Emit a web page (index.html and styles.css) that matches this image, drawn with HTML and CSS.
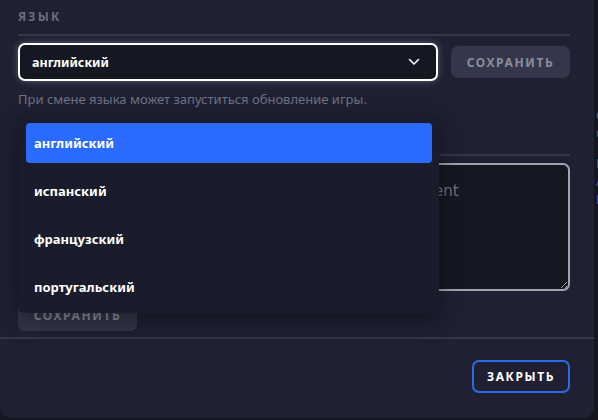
FILE: index.html
```html
<!DOCTYPE html>
<html lang="ru">
<head>
<meta charset="utf-8">
<link rel="stylesheet" href="styles.css">
</head>
<body>
<div class="backdrop">
  <div class="modal">
    <div class="body">
      <div class="section-label">ЯЗЫК</div>
      <div class="divider"></div>
      <div class="row">
        <div class="select">
          <span class="select-value">английский</span>
          <svg class="chevron" width="12" height="8" viewBox="0 0 12 8"><path d="M1.5 1.5 L6 6 L10.5 1.5" fill="none" stroke="#ffffff" stroke-width="1.6" stroke-linecap="round" stroke-linejoin="round"/></svg>
        </div>
        <button class="btn-muted">СОХРАНИТЬ</button>
      </div>
      <p class="hint">При смене языка может запуститься обновление игры.</p>

      <div class="section-label second">ОТЗЫВ</div>
      <div class="divider"></div>
      <textarea class="comment" placeholder="Tell us what you really think about the game agreement"></textarea>
      <button class="btn-muted small">СОХРАНИТЬ</button>

      <ul class="dropdown">
        <li class="option active">английский</li>
        <li class="option">испанский</li>
        <li class="option">французский</li>
        <li class="option">португальский</li>
      </ul>
    </div>
    <div class="footer">
      <button class="btn-close">ЗАКРЫТЬ</button>
    </div>
  </div>
  <div class="behind">
    <span>О</span><span>С</span><span class="gap">Н</span><span class="blue">/</span><span class="blue">F</span>
  </div>
</div>
</body>
</html>
```

FILE: styles.css
```css
* { box-sizing: border-box; }
html, body { margin: 0; padding: 0; }
body {
  width: 598px;
  height: 420px;
  overflow: hidden;
  background: #15161f;
  font-family: "Noto Sans", "Open Sans", sans-serif;
}
.backdrop {
  display: flex;
  height: 420px;
}
.modal {
  width: 594px;
  height: 418px;
  flex: none;
  background: #1f2133;
  border-radius: 0 0 12px 12px;
  display: flex;
  flex-direction: column;
  overflow: hidden;
}
.body {
  position: relative;
  padding: 8px 24px 0 18px;
}
.section-label {
  font-size: 12px;
  line-height: 18px;
  font-weight: 700;
  letter-spacing: 2.2px;
  color: #6b6d7d;
}
.section-label.second { margin-top: 20px; }
.divider {
  height: 2px;
  background: #34364a;
  margin-top: 8px;
}
.row {
  display: flex;
  align-items: center;
  gap: 13px;
  margin-top: 7px;
}
.select {
  width: 420px;
  height: 38px;
  border: 2px solid #ffffff;
  border-radius: 7px;
  background: #151722;
  box-shadow: 0 0 7px rgba(255, 255, 255, 0.28);
  display: flex;
  align-items: center;
  justify-content: space-between;
  padding: 0 16px 0 12px;
}
.select-value {
  color: #ffffff;
  font-size: 12.5px;
  font-weight: 700;
}
.btn-muted {
  height: 32px;
  width: 119px;
  border: none;
  border-radius: 7px;
  background: #34364a;
  color: #8b8d9b;
  font-family: inherit;
  font-size: 12px;
  font-weight: 700;
  letter-spacing: 1.6px;
  padding: 0;
}
.hint {
  margin: 9px 0 0;
  font-size: 13px;
  line-height: 18px;
  color: #6f7283;
}
.comment {
  display: block;
  width: 100%;
  height: 128px;
  margin-top: 7px;
  border: 2px solid #a3a4ad;
  border-radius: 7px;
  background: #151722;
  padding: 16px 12px 16px 18px;
  font-family: "DejaVu Sans", sans-serif;
  font-size: 15px;
  line-height: 20px;
  color: #ffffff;
  resize: vertical;
}
.comment::placeholder { color: #72747f; }
.btn-muted.small {
  display: block;
  margin-top: 8px;
}
.dropdown {
  position: absolute;
  left: 18px;
  top: 115px;
  width: 421px;
  margin: 0;
  padding: 8px 7px 6px 8px;
  list-style: none;
  background: #1a1c2b;
  border-radius: 6px;
  box-shadow: 0 6px 24px rgba(0, 0, 0, 0.45);
  display: flex;
  flex-direction: column;
  gap: 8px;
}
.option {
  height: 40px;
  display: flex;
  align-items: center;
  padding: 0 8px;
  border-radius: 4px;
  color: #ffffff;
  font-size: 13px;
  font-weight: 700;
}
.option.active { background: #2a6afd; }
.footer {
  margin-top: 6px;
  border-top: 2px solid #34364a;
  display: flex;
  justify-content: flex-end;
  padding: 21px 24px 0 0;
}
.btn-close {
  height: 33px;
  width: 98px;
  border: 2px solid #2c6be4;
  border-radius: 7px;
  background: transparent;
  color: #ffffff;
  font-family: inherit;
  font-size: 12px;
  font-weight: 700;
  letter-spacing: 1.6px;
  padding: 0;
}
.behind {
  display: flex;
  flex-direction: column;
  padding-top: 106px;
  padding-left: 2px;
  color: #5e6070;
  font-size: 13px;
  line-height: 18px;
  white-space: nowrap;
}
.behind .gap { margin-top: 12px; }
.behind .blue { color: #2c5fc8; }
```
